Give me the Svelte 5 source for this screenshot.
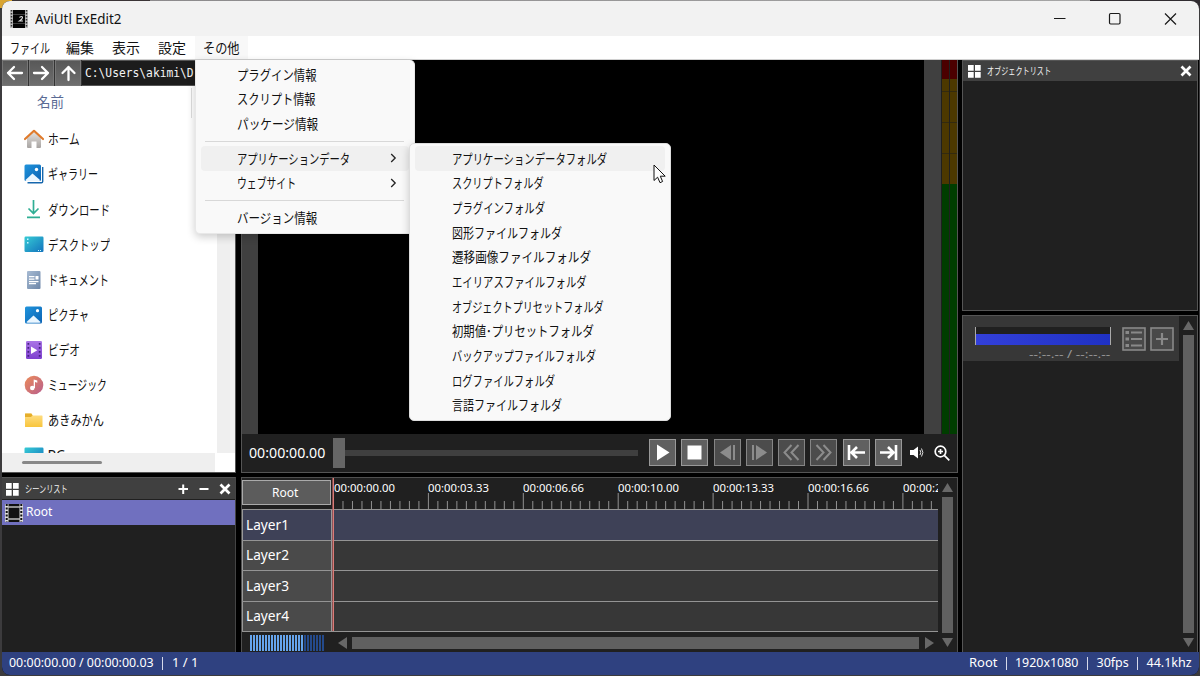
<script>
  const menuBar = [
    { t: 'ファイル', w: 40, box: 56 },
    { t: '編集', w: 28, box: 46 },
    { t: '表示', w: 28, box: 45.5 },
    { t: '設定', w: 28, box: 37 },
    { t: 'その他', w: 37, box: 53, open: true }
  ];
  const menu = [
    { t: 'プラグイン情報', w: 80 },
    { t: 'スクリプト情報', w: 79 },
    { t: 'パッケージ情報', w: 81 },
    { sep: true },
    { t: 'アプリケーションデータ', w: 113, sub: true, hot: true },
    { t: 'ウェブサイト', w: 59, sub: true },
    { sep: true },
    { t: 'バージョン情報', w: 80 }
  ];
  const submenu = [
    { t: 'アプリケーションデータフォルダ', w: 155, hot: true },
    { t: 'スクリプトフォルダ', w: 92 },
    { t: 'プラグインフォルダ', w: 93 },
    { t: '図形ファイルフォルダ', w: 110 },
    { t: '遷移画像ファイルフォルダ', w: 139 },
    { t: 'エイリアスファイルフォルダ', w: 135 },
    { t: 'オブジェクトプリセットフォルダ', w: 152 },
    { t: '初期値･プリセットフォルダ', w: 142 },
    { t: 'バックアップファイルフォルダ', w: 144 },
    { t: 'ログファイルフォルダ', w: 103 },
    { t: '言語ファイルフォルダ', w: 110 }
  ];
  const places = [
    { t: 'ホーム', w: 32, icon: 'home' },
    { t: 'ギャラリー', w: 50, icon: 'gallery' },
    { t: 'ダウンロード', w: 62, icon: 'download' },
    { t: 'デスクトップ', w: 62, icon: 'desktop' },
    { t: 'ドキュメント', w: 61, icon: 'doc' },
    { t: 'ピクチャ', w: 41, icon: 'picture' },
    { t: 'ビデオ', w: 32, icon: 'video' },
    { t: 'ミュージック', w: 59, icon: 'music' },
    { t: 'あきみかん', w: 56, icon: 'folder' },
    { t: 'PC', w: 17, icon: 'pc' }
  ];
  const player = ['play', 'stop', 'prev', 'next', 'rew', 'fwd', 'first', 'last'];
  const times = ['00:00:00.00', '00:00:03.33', '00:00:06.66', '00:00:10.00', '00:00:13.33', '00:00:16.66', '00:00:20.00'];
  const ticks = Array.from({ length: 64 }, (_, i) => i);
  const layers = ['Layer1', 'Layer2', 'Layer3', 'Layer4'];
  const bars = Array.from({ length: 25 }, (_, i) => i);

  // Condenses or widens a run of text to the width its slot asks for.
  function fit(node, width) {
    node.style.transform = `scaleX(${width / node.offsetWidth})`;
  }
</script>

{#snippet text(t, w)}
  <span class="slot" style="width:{w}px"><span class="fit" use:fit={w}>{t}</span></span>
{/snippet}

{#snippet grip()}
  <svg width="13" height="13" viewBox="0 0 13 13" fill="#fff"><path d="M0 0h5.7v5.7H0zM7 0h5.7v5.7H7zM0 7h5.7v5.7H0zM7 7h5.7v5.7H7z" /></svg>
{/snippet}

{#snippet tri(dir)}
  <svg class="tri" width="11" height="9" viewBox="0 0 11 9" fill="#686868"><path d={dir === 'up' ? 'M5.5 0L11 9H0z' : 'M0 0h11L5.5 9z'} /></svg>
{/snippet}

{#snippet placeIcon(n)}
  <svg width="20" height="20" viewBox="0 0 20 20">
    {#if n === 'home'}
      <path d="M3 8.500L10 2l7 6.500V18q0 1-1 1h-3.500v-6.500h-5V19H4q-1 0-1-1z" fill="url(#gHome)" />
      <path d="M1 10L10 1.800l9 8.200" fill="none" stroke="#e07b2c" stroke-width="2.200" stroke-linecap="round" stroke-linejoin="round" />
    {:else if n === 'gallery'}
      <path d="M3.500 18.700h14q1.200 0 1.200-1.200V3" fill="none" stroke="#1667ad" stroke-width="1.400" />
      <rect x="0.500" y="0.500" width="16.500" height="16.500" rx="1.500" fill="url(#gBlue)" />
      <path d="M1.500 16L8.500 9.500l7.500 6.500q0 1-1 1H2.500q-1 0-1-1z" fill="#eaf6ff" /><circle cx="12.500" cy="5.500" r="1.700" fill="#fff" />
    {:else if n === 'picture'}
      <rect x="1" y="1.500" width="17" height="17" rx="1.500" fill="url(#gBlue)" />
      <path d="M2.500 17L9.500 10.500l7 6.500q0 .8-1 .8H3.500q-1 0-1-.8z" fill="#eaf6ff" /><circle cx="13.500" cy="5.700" r="1.600" fill="#fff" />
    {:else if n === 'download'}
      <path d="M9.500 1v13M4.500 9.500l5 5 5-5M3 18.300h13" fill="none" stroke="#2fae94" stroke-width="1.700" />
    {:else if n === 'desktop' || n === 'pc'}
      <rect x="0.500" y="2.500" width="19" height="15.500" rx="1.200" fill="url(#gCyan)" />
      {#if n === 'desktop'}<path d="M3 4.500h1.500V6H3zM3 8h1.500v1.500H3zM14 16h1v1h-1zM16 16h1v1h-1z" fill="#c9f6ff" />{/if}
    {:else if n === 'doc'}
      <rect x="3" y="1" width="13.500" height="18" rx="1" fill="url(#gDoc)" />
      <path d="M5 6h5.500v1.200H5zM5 8.500h5.500v1.200H5zM11.500 6h3v3.500h-3zM5 11h9.500v1.200H5zM5 13h7v1.200H5z" fill="#fff" />
    {:else if n === 'video'}
      <rect x="2" y="1" width="16" height="18" rx="1.200" fill="url(#gVid)" />
      <path d="M3.500 3h1.700v1.700H3.500zM3.500 7h1.700v1.700H3.500zM3.500 11h1.700v1.700H3.500zM3.500 15h1.700v1.700H3.500zM14.800 3h1.700v1.700h-1.700zM14.800 7h1.700v1.700h-1.700zM14.800 11h1.700v1.700h-1.700zM14.800 15h1.700v1.700h-1.700z" fill="#45207f" />
      <path d="M7 6.500l6.300 3.800L7 14z" fill="#fff" />
    {:else if n === 'music'}
      <circle cx="10" cy="10" r="9.300" fill="url(#gMus)" /><circle cx="8.300" cy="13" r="2.300" fill="#fff" />
      <path d="M9.700 13V4.500l3.600 1v2.200l-2.300-.6V13z" fill="#fff" />
    {:else}
      <path d="M1 4.500q0-1 1-1h5l2 2h9q.5 0 .5.500v10.500q0 .5-.5.500H1.500q-.5 0-.5-.5z" fill="url(#gFold)" />
      <path d="M1 3.500h6.500l1 2-1.500 1.500H1z" fill="#e5ae2b" />
    {/if}
  </svg>
{/snippet}

<svg width="0" height="0" class="defs">
  <linearGradient id="gHome" x2="0" y2="1"><stop stop-color="#e8e5e2" /><stop offset="1" stop-color="#a8a4a2" /></linearGradient>
  <linearGradient id="gBlue" x2="1" y2="1"><stop stop-color="#2094dc" /><stop offset="1" stop-color="#0b63b4" /></linearGradient>
  <linearGradient id="gCyan" x2="1" y2="1"><stop stop-color="#36cbd5" /><stop offset="1" stop-color="#1373bd" /></linearGradient>
  <linearGradient id="gDoc" x2="1" y2="1"><stop stop-color="#a7bbd3" /><stop offset="1" stop-color="#6d86a8" /></linearGradient>
  <linearGradient id="gVid" x2="0" y2="1"><stop stop-color="#aa75e6" /><stop offset="1" stop-color="#7e40cf" /></linearGradient>
  <linearGradient id="gMus" x2="1" y2="1"><stop stop-color="#ec8c59" /><stop offset="1" stop-color="#b85e8d" /></linearGradient>
  <linearGradient id="gFold" x2="0" y2="1"><stop stop-color="#ffe08a" /><stop offset="1" stop-color="#f8c53c" /></linearGradient>
</svg>

<div class="desktop">
  <div class="window">
    <header class="title">
      <svg width="18" height="18" viewBox="0 0 18 18">
        <rect width="18" height="18" fill="#bdbdbd" /><rect x="3" width="12" height="18" fill="#050505" />
        <path d="M1.500 0v18M16.500 0v18" stroke="#333" stroke-width="1.500" stroke-dasharray="1.500 1.500" />
        <path d="M3 4.500h12M3 13.500h12" stroke="#555" stroke-width=".7" />
        <path d="M9.500 7.500q2.500-2 3 0 0 1.500-3 3.500h3.500" fill="none" stroke="#ddd" stroke-width="1.200" />
      </svg>
      <span class="name">{@render text('AviUtl ExEdit2', 86)}</span>
      <svg class="winbtns" width="128" height="16" viewBox="0 0 128 16" fill="none" stroke="#1a1a1a" stroke-width="1.200">
        <path d="M1 7.500h11.500" /><rect x="56.500" y="2.500" width="10.500" height="10.500" rx="1.200" /><path d="M112 2.500l11 11M123 2.500l-11 11" />
      </svg>
    </header>
    <nav class="menubar">
      {#each menuBar as m}
        <div class="mb" class:open={m.open} style="width:{m.box}px">{@render text(m.t, m.w)}</div>
      {/each}
    </nav>

    <main>
      <section class="left">
        <div class="panel files">
          <div class="path">
            {#each ['M18 9H4M10 3L4 9l6 6', 'M3 9h14M11 3l6 6-6 6', 'M10.500 16V3M4.500 9l6-6 6 6'] as d}
              <button><svg width="21" height="18" viewBox="0 0 21 18" fill="none" stroke="#fff" stroke-width="2.300" stroke-linecap="round" stroke-linejoin="round"><path {d} /></svg></button>
            {/each}
            <div class="addr">{@render text('C:\\Users\\akimi\\D', 109)}</div>
          </div>
          <div class="tree">
            <div class="list">
              <div class="colhead">{@render text('名前', 27)}<i></i></div>
              {#each places as p}
                <div class="place">{@render placeIcon(p.icon)}{@render text(p.t, p.w)}</div>
              {/each}
            </div>
            <div class="vtrack"></div>
          </div>
          <div class="hbar"><div class="htrack"><i></i></div></div>
        </div>
        <div class="panel scenes">
          <div class="phead">
            {@render grip()}{@render text('シーンリスト', 43)}
            <svg class="acts" width="54" height="12" viewBox="0 0 54 12" fill="none" stroke="#fff" stroke-width="2"><path d="M1.500 6h9.500M6.200 1.500v9.500M22.500 6h9" /><path d="M43.500 1.500l9 9M52.500 1.500l-9 9" stroke-width="2.700" /></svg>
          </div>
          <div class="scene">
            <svg width="18" height="18" viewBox="0 0 18 18"><rect width="18" height="18" fill="#ddd" /><rect x="3.500" y="0" width="11" height="18" fill="#111" /><path d="M1.700 0v18M16.300 0v18" stroke="#111" stroke-width="2" stroke-dasharray="2 1.500" /><path d="M3 3h12M3 15h12" stroke="#bbb" stroke-width="1.300" /></svg>
            {@render text('Root', 26)}
          </div>
        </div>
      </section>

      <section class="center">
        <div class="panel preview">
          <div class="stage">
            <div class="side"></div><div class="black"></div><div class="side wide"></div>
            <div class="meter"><i></i><i></i></div>
          </div>
          <div class="controls">
            <div class="time">{@render text('00:00:00.00', 76)}</div>
            <div class="seek"><b></b><i></i></div>
            <div class="btns">
              {#each player as b, i}
                <button class:dim={i > 1 && i < 6}>
                  <svg width="23" height="23" viewBox="0 0 23 23" fill="none" stroke="currentColor" stroke-width="2">
                    {#if b === 'play'}<path d="M6 3.500L18.500 11.500 6 19.500z" fill="currentColor" stroke="none" />
                    {:else if b === 'stop'}<path d="M4.500 4.500h14v14h-14z" fill="currentColor" stroke="none" />
                    {:else if b === 'prev'}<path d="M15 4v15L4 11.500z" fill="currentColor" stroke="none" /><path d="M18 4v15" />
                    {:else if b === 'next'}<path d="M8 4v15l11-7.500z" fill="currentColor" stroke="none" /><path d="M5 4v15" />
                    {:else if b === 'rew'}<path d="M11.500 4L4.500 11.500l7 7.500M18.500 4l-7 7.500 7 7.500" />
                    {:else if b === 'fwd'}<path d="M4.500 4l7 7.500-7 7.500M11.500 4l7 7.500-7 7.500" />
                    {:else if b === 'first'}<path d="M4 4v15M20 11.500H6.500M12 6l-5.500 5.500L12 17" stroke-width="2.600" />
                    {:else}<path d="M19 4v15M3 11.500h13.500M11 6l5.500 5.500L11 17" stroke-width="2.600" />{/if}
                  </svg>
                </button>
              {/each}
            </div>
            <svg class="spk" width="15" height="13" viewBox="0 0 15 13" fill="#fff"><path d="M0 4h3.500L8 .5v12L3.500 9H0z" /><path d="M10 4q1.500 2.500 0 5M11.500 2.500q2.800 4 0 8" fill="none" stroke="#ddd" /></svg>
            <svg class="mag" width="16" height="16" viewBox="0 0 16 16" fill="none" stroke="#fff" stroke-width="1.700"><circle cx="6.500" cy="6.500" r="5.300" /><path d="M10.300 10.300l5 5M4 6.500h5M6.500 4v5" /></svg>
          </div>
        </div>

        <div class="panel timeline">
          <div class="tmain">
            <div class="trow">
              <div class="rootcell"><button class="root">{@render text('Root', 26)}</button></div>
              <div class="ruler">
                <div class="times">{#each times as t}<span>{@render text(t, 61)}</span>{/each}</div>
                <svg width="605" height="16" viewBox="0 0 605 16" stroke="#919191">
                  {#each ticks as i}<path d="M{i * 9.49 + 0.5} {i % 10 ? 8 : 0}V16" />{/each}
                </svg>
              </div>
            </div>
            {#each layers as l, i}
              <div class="layer" class:sel={i === 0}>
                <div class="lname">{@render text(l, 43)}</div><div class="track"></div>
              </div>
            {/each}
            <div class="tfoot">
              <div class="zoom">{#each bars as i}<i class:off={i > 17}></i>{/each}</div>
              <svg width="9" height="12" viewBox="0 0 9 12" fill="#686868"><path d="M9 0v12L0 6z" /></svg>
              <div class="hthumb"></div>
              <svg width="9" height="12" viewBox="0 0 9 12" fill="#686868"><path d="M0 0v12l9-6z" /></svg>
            </div>
            <div class="playhead"></div>
          </div>
          <div class="vscroll">{@render tri('up')}<div class="vthumb"></div>{@render tri('down')}</div>
        </div>
      </section>

      <section class="right">
        <div class="panel objects">
          <div class="phead">
            {@render grip()}{@render text('オブジェクトリスト', 64)}
            <svg class="acts" width="12" height="12" viewBox="0 0 12 12" fill="none" stroke="#fff" stroke-width="2.700"><path d="M1.500 1.500l9 9M10.500 1.500l-9 9" /></svg>
          </div>
        </div>
        <div class="panel props">
          <div class="pmain">
            <div class="media">
              <div class="wave"><div class="lvl"><i></i></div><span class="dur">{@render text('--:--.-- / --:--.--', 81)}</span></div>
              <svg width="24" height="24" viewBox="0 0 24 24" fill="none" stroke="#898989" stroke-width="1.600"><rect x="1" y="1" width="22" height="22" fill="#494949" /><path d="M9 5.500h11M9 12h11M9 18.500h11" stroke-width="2" /><path d="M3.500 5.500h3.500M3.500 12h3.500M3.500 18.500h3.500" stroke-width="3.200" /></svg>
              <svg width="24" height="24" viewBox="0 0 24 24" fill="none" stroke="#898989" stroke-width="1.600"><rect x="1" y="1" width="22" height="22" fill="#494949" /><path d="M6 12h12M12 6v12" stroke-width="2.200" /></svg>
            </div>
          </div>
          <div class="vscroll">{@render tri('up')}<div class="vthumb"></div>{@render tri('down')}</div>
        </div>
      </section>
    </main>

    <footer>
      {@render text('00:00:00.00 / 00:00:00.03', 145)}<i></i>{@render text('1 / 1', 26)}
      <span class="grow"></span>
      {@render text('Root', 28)}<i></i>{@render text('1920x1080', 63.5)}<i></i>{@render text('30fps', 32)}<i></i>{@render text('44.1khz', 45)}
    </footer>
  </div>

  <div class="popup main">
    {#each menu as m}
      {#if m.sep}<div class="sep"></div>
      {:else}
        <div class="mi" class:hot={m.hot}>{@render text(m.t, m.w)}{#if m.sub}<svg width="7" height="10" viewBox="0 0 7 10" fill="none" stroke="#222" stroke-width="1.300"><path d="M1.200 1l4 4-4 4" /></svg>{/if}</div>
      {/if}
    {/each}
  </div>
  <div class="popup sub">
    {#each submenu as m}<div class="mi" class:hot={m.hot}>{@render text(m.t, m.w)}</div>{/each}
  </div>
  <svg class="cursor" width="13" height="20" viewBox="0 0 13 20"><path d="M1 1v15.500l3.600-3.300 2.400 5.500 2.600-1.200-2.300-5.300h4.900z" fill="#fff" stroke="#111" stroke-width="1" /></svg>
</div>

<style>
  :global(body) { margin: 0; overflow: hidden; }
  .defs { position: absolute; }
  svg { display: block; flex: none; }
  .desktop { position: relative; width: 1200px; height: 676px; overflow: hidden; background: linear-gradient(90deg, #d9a532 12px, #3a3436 12px, #3a3436 150px, #8c8a8c 150px, #a5a5a5 1090px, #302c30 1090px) 0 0/100% 8px no-repeat, #3c3b3d; font-family: 'Noto Sans', 'Noto Sans CJK JP', sans-serif; font-size: 13.500px; color: #111; }
  .window { box-sizing: border-box; margin: 1px 1px 0 2px; width: 1197px; height: 674px; border-radius: 8px; overflow: hidden; background: #000; display: flex; flex-direction: column; }
  .slot { display: inline-block; white-space: nowrap; text-align: left; flex: none; overflow: visible; margin-top: -1.500px; }
  .fit { display: inline-block; transform-origin: 0 50%; }
  .title { height: 35px; background: #f2f2f2; display: flex; align-items: center; padding: 0 18px 0 8px; gap: 7px; }
  .title .name { font-size: 14px; }
  .winbtns { margin-left: auto; }
  .menubar { height: 23px; background: #fff; border-bottom: 1px solid #d0d0d0; display: flex; align-items: stretch; padding-left: 8px; }
  .mb { box-sizing: border-box; display: flex; align-items: center; }
  .open { background: #f8f8f8; padding-left: 8px; }
  main { flex: 1; min-height: 0; display: grid; grid-template-columns: 235px 717px 236px; column-gap: 4px; width: 1196px; }
  section { display: flex; flex-direction: column; gap: 4px; min-height: 0; min-width: 0; }
  .panel { box-sizing: border-box; background: #202020; overflow: hidden; display: flex; }
  button { padding: 0; margin: 0; font: inherit; color: inherit; border: 0; border-radius: 0; }

  .left { width: 234px; }
  .files { height: 413px; flex-direction: column; border-right: 1px solid #555; border-bottom: 1px solid #555; }
  .path { height: 26px; display: flex; background: #333; gap: 1px; flex: none; }
  .path button { width: 25.700px; background: linear-gradient(#585858, #6e6e6e); box-sizing: border-box; border: 1px solid #777; display: grid; place-items: center; }
  .addr { flex: 1; background: #1c1c1c; color: #f4f4f4; font: 12px 'DejaVu Sans Mono', monospace; display: flex; align-items: center; padding-left: 3px; border-top: 1px solid #555; border-bottom: 1px solid #555; }
  .addr .slot { margin-top: 0; }
  .tree { flex: 1; min-height: 0; background: #fff; display: flex; }
  .list { flex: 1; overflow: hidden; }
  .vtrack { width: 18px; background: #efefef; }
  .colhead { height: 33px; box-sizing: border-box; padding-left: 35px; display: flex; align-items: center; color: #5a6a94; margin-bottom: 2.500px; font-size: 14px; }
  .colhead .slot { margin-top: -4px; }
  .colhead i { width: 1px; height: 30px; background: #ddd; margin-left: 127px; }
  .place { height: 35.150px; display: flex; align-items: center; gap: 4px; padding-left: 21.500px; font-size: 14px; }
  .hbar { height: 19px; background: #fff; display: flex; flex: none; }
  .htrack { width: 213px; background: #efefef; display: flex; align-items: center; }
  .htrack i { width: 80px; height: 2.500px; border-radius: 2px; background: #888; margin-left: 20px; }

  .scenes { flex: 1; flex-direction: column; border-right: 1px solid #444; border-top: 1px solid #555; }
  .phead { height: 20px; flex: none; box-sizing: border-box; background: #404040; display: flex; align-items: center; gap: 6px; padding: 0 5px 0 5px; color: #f2f2f2; font-size: 10px; }
  .scenes .phead { height: 21px; padding: 1px 4px 0; }
  .acts { margin-left: auto; }
  .scene { margin-top: 1px; height: 25px; background: #7070bf; color: #fff; display: flex; align-items: center; gap: 3px; padding-left: 3px; font-size: 12.500px; }

  .preview { height: 413px; flex-direction: column; border: 1px solid #555; border-top: 0; }
  .stage { height: 374px; display: flex; }
  .side { width: 16px; background: #404040; }
  .wide { width: 17.500px; }
  .black { flex: 1; background: #000; }
  .meter { width: 16px; display: flex; gap: 1.500px; padding-left: 1px; box-sizing: border-box; }
  .meter i { width: 6.500px; background: linear-gradient(#4b0000 19px, #4c3800 19px, #4c3800 31px, #332a10 31px, #332a10 32px, #4c3800 32px, #4c3800 62px, #332a10 62px, #332a10 63px, #4c3800 63px, #4c3800 93px, #332a10 93px, #332a10 94px, #4c3800 94px, #4c3800 124px, #003d00 124px); }
  .controls { flex: 1; display: flex; align-items: center; color: #fff; padding-bottom: 1px; }
  .time { padding-left: 6.500px; width: 91px; box-sizing: border-box; font-size: 14px; }
  .seek { width: 305px; display: flex; align-items: center; }
  .seek b { width: 12px; height: 30px; background: #666; }
  .seek i { flex: 1; height: 6px; background: #3f3f3f; }
  .btns { display: flex; gap: 5.300px; margin-left: 11px; }
  .btns button { width: 27px; height: 27px; box-sizing: border-box; background: #606060; border: 1.500px solid #999; display: grid; place-items: center; color: #fff; }
  .btns .dim { background: #4c4c4c; border-color: #858585; color: #8c8c8c; }
  .spk { margin-left: 8px; }
  .mag { margin-left: 9px; }

  .timeline { flex: 1; border: 1px solid #505050; border-bottom: 0; }
  .tmain { width: 696px; position: relative; }
  .trow { display: flex; height: 31px; }
  .rootcell { width: 91px; padding-top: 2px; box-sizing: border-box; }
  .root { width: 89px; height: 25px; background: #5c5c5c; border: 1px solid #aaa; color: #fff; font-size: 12.500px; display: flex; align-items: center; justify-content: center; padding-right: 3px; }
  .root .slot { margin-top: 0; }
  .ruler { width: 605px; overflow: hidden; color: #fff; }
  .times { display: flex; height: 15px; font-size: 11.500px; line-height: 18px; }
  .times .slot { margin-top: 0.500px; }
  .times > span { width: 94.900px; flex: none; padding-left: 0.500px; box-sizing: border-box; }
  .layer { height: 30.500px; box-sizing: border-box; display: flex; border-top: 1px solid #949494; background: #373737; }
  .lname { width: 90px; box-sizing: border-box; border-right: 1px solid #999; border-left: 1px solid #999; padding-left: 3px; color: #fff; font-size: 14px; background: #4a4a4a; display: flex; align-items: center; }
  .sel, .sel .lname { background: #3e4157; }
  .track { flex: 1; }
  .tfoot { border-top: 1px solid #949494; height: 23px; display: flex; align-items: center; box-sizing: border-box; padding-left: 8px; }
  .zoom { display: flex; gap: 1px; width: 74px; height: 16px; margin-right: 14px; }
  .zoom i { width: 2px; background: #65a4ec; flex: none; }
  .zoom .off { background: #244a8b; }
  .hthumb { width: 567px; height: 12px; background: #606060; margin: 0 6px 0 5px; }
  .playhead { position: absolute; left: 90px; top: 0; width: 2px; height: 153px; background: linear-gradient(90deg, #b05c5cb0 50%, #d97c78 50%); }
  .vscroll { display: flex; flex-direction: column; align-items: center; width: 18px; box-sizing: border-box; padding: 5px 0 5px; gap: 5px; background: #202020; }
  .vthumb { flex: 1; width: 11px; background: #606060; }

  .objects { height: 251px; flex-direction: column; border: 1px solid #555; }
  .props { flex: 1; border: 1px solid #555; border-bottom: 0; }
  .pmain { flex: 1; }
  .media { height: 45px; background: #373737; display: flex; align-items: flex-start; padding: 11px 0 0 12px; box-sizing: border-box; gap: 4.500px; }
  .wave { width: 136px; margin-right: 6px; display: flex; flex-direction: column; align-items: flex-end; }
  .lvl { width: 134px; height: 18px; background: #202020; border: solid #aaa; border-width: 0 1px; display: flex; align-items: flex-end; }
  .lvl i { flex: 1; height: 11px; background: linear-gradient(90deg, #3340da, #1f31c4); }
  .dur { font-size: 11px; line-height: 14px; color: #999; padding: 2px 1px 0 0; }
  .right .vscroll { width: 18px; }

  footer { height: 23px; background: #2f4180; color: #fff; display: flex; align-items: center; padding: 0 7.500px 0 6.500px; font-size: 12.500px; }
  footer i { width: 1px; height: 13px; background: #d6d9ea; margin: 0 8.500px; }
  .grow { flex: 1; }

  .popup { position: absolute; box-sizing: border-box; background: #f9f9f9; border-radius: 5px; box-shadow: 0 3px 8px #0003; }
  .main { left: 195px; top: 60px; width: 219.500px; height: 174px; padding-top: 2px; border-radius: 0 5px 5px 5px; border: 1px solid #e8e8e8; border-top: 0; }
  .sub { left: 409px; top: 143px; width: 262px; height: 277.500px; padding-top: 2px; border: 1px solid #ddd; }
  .mi { height: 24.700px; display: flex; align-items: center; justify-content: space-between; margin: 0 5px; padding: 0 12px 0 36px; border-radius: 4px; }
  .sub .mi { padding-left: 36.500px; }
  .hot { background: #f0f0f0; }
  .sep { height: 10px; margin: 0 10px 0 9px; background: linear-gradient(#d8d8d8, #d8d8d8) 0 50%/100% 1px no-repeat; }
  .cursor { position: absolute; left: 653px; top: 164px; }
</style>
